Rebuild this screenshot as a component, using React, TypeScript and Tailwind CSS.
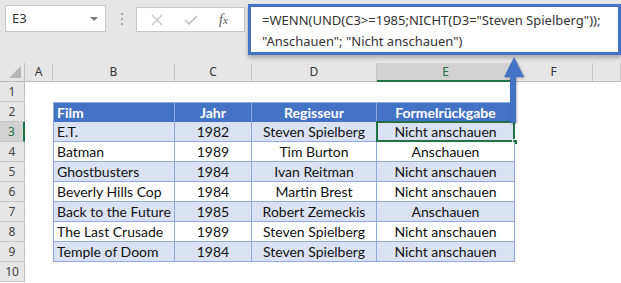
import React from 'react';

type Row = { film: string; jahr: string; regie: string; ergebnis: string };

const rows: Row[] = [
  { film: 'E.T.', jahr: '1982', regie: 'Steven Spielberg', ergebnis: 'Nicht anschauen' },
  { film: 'Batman', jahr: '1989', regie: 'Tim Burton', ergebnis: 'Anschauen' },
  { film: 'Ghostbusters', jahr: '1984', regie: 'Ivan Reitman', ergebnis: 'Nicht anschauen' },
  { film: 'Beverly Hills Cop', jahr: '1984', regie: 'Martin Brest', ergebnis: 'Nicht anschauen' },
  { film: 'Back to the Future', jahr: '1985', regie: 'Robert Zemeckis', ergebnis: 'Anschauen' },
  { film: 'The Last Crusade', jahr: '1989', regie: 'Steven Spielberg', ergebnis: 'Nicht anschauen' },
  { film: 'Temple of Doom', jahr: '1984', regie: 'Steven Spielberg', ergebnis: 'Nicht anschauen' },
];

const uiFont = { fontFamily: '"Noto Sans", "Open Sans", sans-serif' };
const cellFont = { fontFamily: 'Lato, "Liberation Sans", sans-serif' };

function RowHead({ n, active }: { n: number; active?: boolean }) {
  return (
    <div
      className={
        'flex items-center justify-center border-b border-r text-[12px] ' +
        (active
          ? 'border-b-[#c6c6c6] border-r-[#217346] border-r-2 bg-[#d2d2d2] text-[#217346]'
          : 'border-b-[#c6c6c6] border-r-[#bdbdbd] bg-[#e6e6e6] text-[#444]')
      }
      style={uiFont}
    >
      {n}
    </div>
  );
}

function Empty() {
  return <div className="bg-white" />;
}

export default function App() {
  return (
    <div className="relative h-[283px] w-[621px] overflow-hidden bg-white">
      {/* formula bar */}
      <div className="flex h-[63px] items-start bg-[#e6e6e6]">
        <div
          className="ml-[5px] mt-[5px] flex h-[27px] w-[101px] items-center justify-between border border-[#c6c6c6] bg-white pl-[6px] pr-[7px] text-[13px] text-[#333]"
          style={uiFont}
        >
          <span>E3</span>
          <span className="h-0 w-0 border-x-[4px] border-t-[4px] border-x-transparent border-t-[#777]" />
        </div>
        <div className="ml-[15px] mt-[13px] flex flex-col gap-[3px]">
          <span className="h-[2px] w-[2px] bg-[#aaa]" />
          <span className="h-[2px] w-[2px] bg-[#aaa]" />
          <span className="h-[2px] w-[2px] bg-[#aaa]" />
        </div>
        <div className="ml-[13px] mt-[7px] flex h-[25px] w-[109px] items-center border border-[#c6c6c6] bg-white">
          <svg width="12" height="12" viewBox="0 0 12 12" className="ml-[14px]">
            <path d="M1 1 L11 11 M11 1 L1 11" stroke="#c8c8c8" strokeWidth="1.4" fill="none" />
          </svg>
          <svg width="14" height="12" viewBox="0 0 14 12" className="ml-[21px]">
            <path d="M1 6 L5 10 L13 2" stroke="#c8c8c8" strokeWidth="1.8" fill="none" />
          </svg>
          <span
            className="ml-[21px] text-[14px] italic text-[#555]"
            style={{ fontFamily: '"Liberation Serif", serif' }}
          >
            f<span className="text-[11px]">x</span>
          </span>
        </div>
        <div
          className="ml-[3px] mt-[4px] h-[51px] flex-1 whitespace-nowrap border-[3px] border-[#4472c4] bg-white pl-[11px] pt-[3px] text-[13px] leading-[21px] text-[#333] shadow-[0_3px_4px_rgba(0,0,0,0.25)]"
          style={uiFont}
        >
          <div>=WENN(UND(C3&gt;=1985;NICHT(D3="Steven Spielberg"));</div>
          <div>"Anschauen"; "Nicht anschauen")</div>
        </div>
      </div>

      {/* sheet */}
      <div className="grid grid-cols-[25px_28px_122px_77px_125px_138px_78px_28px] grid-rows-[19px_repeat(10,20px)]">
        {/* column headers */}
        <div className="relative border-b border-r border-[#bdbdbd] bg-[#e6e6e6]">
          <span className="absolute bottom-[3px] right-[3px] h-0 w-0 border-b-[12px] border-l-[12px] border-b-[#b4b4b4] border-l-transparent" />
        </div>
        {['A', 'B', 'C', 'D', 'E', 'F', ''].map((c) => (
          <div
            key={c || 'G'}
            className={
              'flex items-center justify-center border-r text-[12px] ' +
              (c === 'E'
                ? 'border-b-2 border-b-[#217346] border-r-[#c6c6c6] bg-[#d2d2d2] text-[#217346]'
                : 'border-b border-b-[#bdbdbd] border-r-[#c6c6c6] bg-[#e6e6e6] text-[#333]')
            }
            style={uiFont}
          >
            {c}
          </div>
        ))}

        {/* row 1 */}
        <RowHead n={1} />
        {Array.from({ length: 7 }).map((_, i) => (
          <Empty key={'r1' + i} />
        ))}

        {/* row 2: table header */}
        <RowHead n={2} />
        <Empty />
        <div
          className="flex items-center whitespace-nowrap border-l border-t border-r border-[#8ea9db] bg-[#4472c4] pl-[3px] text-[14px] font-bold text-white"
          style={cellFont}
        >
          Film
        </div>
        <div
          className="flex items-center justify-center whitespace-nowrap border-r border-t border-[#8ea9db] bg-[#4472c4] text-[14px] font-bold text-white"
          style={cellFont}
        >
          Jahr
        </div>
        <div
          className="flex items-center justify-center whitespace-nowrap border-r border-t border-[#8ea9db] bg-[#4472c4] text-[14px] font-bold text-white"
          style={cellFont}
        >
          Regisseur
        </div>
        <div
          className="flex items-center justify-center whitespace-nowrap border-r border-t border-[#8ea9db] bg-[#4472c4] text-[14px] font-bold text-white"
          style={cellFont}
        >
          Formelrückgabe
        </div>
        <Empty />
        <Empty />

        {rows.map((r, i) => {
          const bg = i % 2 === 0 ? 'bg-[#d9e1f2]' : 'bg-white';
          const cell =
            'flex items-center whitespace-nowrap border-b border-r border-[#8ea9db] text-[14px] text-[#111] ' + bg;
          return (
            <React.Fragment key={r.film}>
              <RowHead n={i + 3} active={i === 0} />
              <Empty />
              <div className={cell + ' border-l pl-[3px]'} style={cellFont}>
                {r.film}
              </div>
              <div className={cell + ' justify-center'} style={cellFont}>
                {r.jahr}
              </div>
              <div className={cell + ' justify-center'} style={cellFont}>
                {r.regie}
              </div>
              <div className={cell + ' relative justify-center'} style={cellFont}>
                {r.ergebnis}
                {i === 0 && (
                  <>
                    <span className="absolute -left-px -top-px bottom-[-1px] right-[-1px] border-2 border-[#217346]" />
                    <span className="absolute bottom-[-4px] right-[-4px] h-[6px] w-[6px] border border-white bg-[#217346]" />
                  </>
                )}
              </div>
              <Empty />
              <Empty />
            </React.Fragment>
          );
        })}

        {/* row 10 */}
        <RowHead n={10} />
        {Array.from({ length: 7 }).map((_, i) => (
          <Empty key={'r10' + i} />
        ))}
      </div>

      {/* arrow from result cell to formula */}
      <svg
        className="absolute left-[502px] top-[56px] drop-shadow-[1px_1px_1px_rgba(0,0,0,0.3)]"
        width="24"
        height="68"
        viewBox="0 0 24 68"
      >
        <polygon points="12,1 22,21 2,21" fill="#4472c4" />
        <rect x="8" y="20" width="6" height="47" fill="#4472c4" />
      </svg>
    </div>
  );
}
